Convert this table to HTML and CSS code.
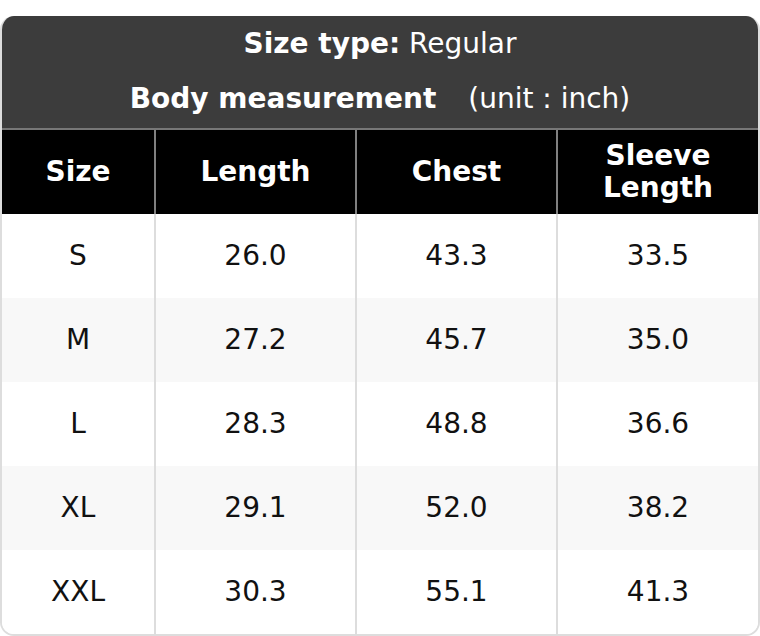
FILE: index.html
```html
<!DOCTYPE html>
<html>
<head>
<meta charset="utf-8">
<link rel="stylesheet" href="styles.css">
</head>
<body>
<div class="card">
  <div class="title">
    <div class="line"><b>Size type:</b> Regular</div>
    <div class="line"><b>Body measurement</b><span class="unit">(unit : inch)</span></div>
  </div>
  <div class="grid">
    <div class="th">Size</div><div class="th">Length</div><div class="th">Chest</div><div class="th">Sleeve<br>Length</div>
    <div class="td">S</div><div class="td">26.0</div><div class="td">43.3</div><div class="td">33.5</div>
    <div class="td alt">M</div><div class="td alt">27.2</div><div class="td alt">45.7</div><div class="td alt">35.0</div>
    <div class="td">L</div><div class="td">28.3</div><div class="td">48.8</div><div class="td">36.6</div>
    <div class="td alt">XL</div><div class="td alt">29.1</div><div class="td alt">52.0</div><div class="td alt">38.2</div>
    <div class="td">XXL</div><div class="td">30.3</div><div class="td">55.1</div><div class="td">41.3</div>
  </div>
</div>
</body>
</html>
```
FILE: styles.css
```css
html, body {
  margin: 0;
  padding: 0;
  background: #fff;
}
body {
  padding-top: 16px;
  font-family: "DejaVu Sans", sans-serif;
}
.card {
  width: 760px;
  box-sizing: border-box;
  border-radius: 14px;
  overflow: hidden;
  border: 2px solid #ddd;
  border-top: none;
  background: #fff;
}
.title {
  background: #3c3c3c;
  color: #fff;
  text-align: center;
  font-size: 28px;
  padding-bottom: 2px;
  margin: 0 -2px;
  border-bottom: 2px solid #777;
}
.line {
  line-height: 55px;
  height: 55px;
}
.unit {
  margin-left: 32px;
}
.grid {
  display: grid;
  grid-template-columns: 154px 201px 201px 200px;
  grid-auto-rows: 84px;
  font-size: 28px;
}
.th, .td {
  display: flex;
  align-items: center;
  justify-content: center;
  text-align: center;
  border-right: 2px solid #ddd;
}
.th:nth-child(4n), .td:nth-child(4n) {
  border-right: none;
}
.th {
  background: #000;
  color: #fff;
  font-weight: bold;
  line-height: 32px;
  border-right-color: #808080;
}
.td {
  color: #111;
  background: #fff;
  padding-bottom: 2px;
}
.td.alt {
  background: #f8f8f8;
}
```
